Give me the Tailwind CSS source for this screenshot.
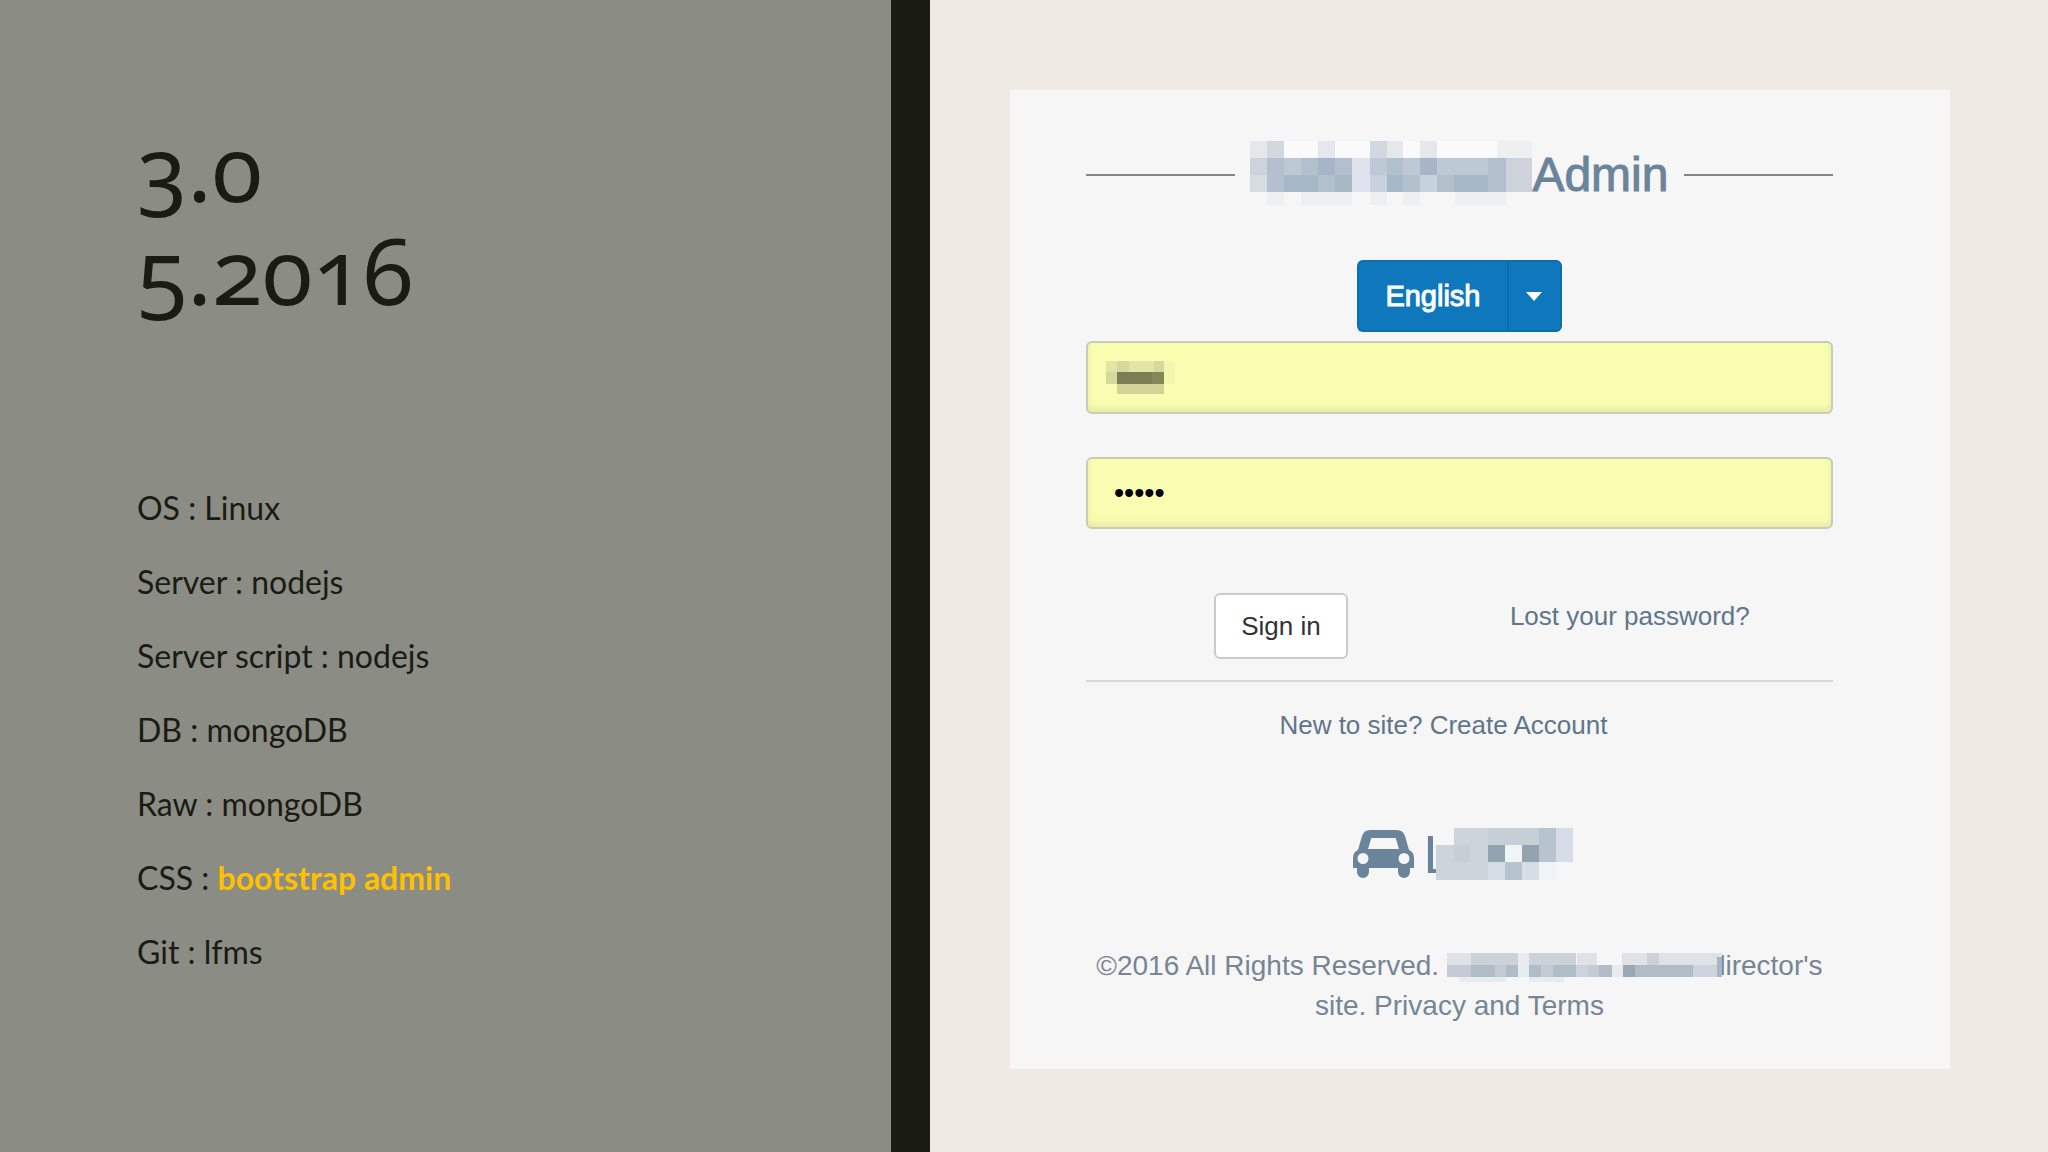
<!DOCTYPE html>
<html lang="en">
<head>
    <meta charset="UTF-8">
    <meta name="viewport" content="width=device-width, initial-scale=1.0">
    <script src="https://cdn.jsdelivr.net/npm/@tailwindcss/browser@4"></script>
    <title>3.0 - 5.2016</title>
</head>
<body class="bg-[#efebe4]">
    <main class="flex min-h-screen">
        <!-- Release notes ---------------- -->
        <section class="w-[43.5%] bg-[#8b8c84] pl-[137px] pt-[115px] text-[#1a1b13] font-[Lato,'Noto_Sans',sans-serif]">
            <h1 class="text-[92px] leading-[103px] font-['Noto_Sans','Open_Sans',sans-serif] [font-variant-numeric:oldstyle-nums] [font-kerning:none]">3.0<br>5.2016</h1>
            <ul class="mt-[150px] text-[32px] leading-[74px]">
                <li>OS : Linux</li>
                <li>Server : nodejs</li>
                <li>Server script : nodejs</li>
                <li>DB : mongoDB</li>
                <li>Raw : mongoDB</li>
                <li>CSS : <strong class="font-bold text-[#ffc000]">bootstrap admin</strong></li>
                <li>Git : lfms</li>
            </ul>
        </section>
        <div class="w-[39px] bg-[#1a1b13]"></div>
        <!-- Login screen ---------------- -->
        <section class="flex-1 pl-20 pr-[98px] py-[90px] font-['Liberation_Sans',Arial,sans-serif]">
            <form class="bg-[#f6f6f7] pl-[76px] pr-[117px] pt-[51px] pb-[43px] text-[26px] leading-8 text-[#5f758a]">
                <div class="flex items-center justify-between">
                    <span class="w-1/5 h-[2px] bg-[#858587]"></span>
                    <h2 class="flex items-center text-[48px] leading-[68px] text-[#6a849b] [-webkit-text-stroke:1px_#6a849b]">
                        <svg class="w-[282px] h-[68px]" viewBox="0 0 282 68" shape-rendering="crispEdges">
                            <path fill="#e5e7eb" d="M0 0h17v17H0zM68 0h17v17H68zM137 0h16v17H137zM170 0h17v17H170z"/>
                            <path fill="#d1d8e0" d="M17 0h17v17H17zM120 0h17v17H120z"/>
                            <path fill="#fafafc" d="M34 0h34v17H34zM85 0h35v17H85zM153 0h17v17H153zM187 0h60v17H187z"/>
                            <path fill="#eeeff0" d="M247 0h35v17H247zM17 51h17v13H17zM51 51h51v13H51zM120 51h17v13H120zM153 51h17v13H153zM205 51h51v13H205z"/>
                            <path fill="#ced2da" d="M0 17h17v17H0zM256 17h26v34H256z"/>
                            <path fill="#d7dce0" d="M0 34h17v17H0z"/>
                            <path fill="#b4bfd0" d="M17 17h17v34H17zM85 17h17v17H85z"/>
                            <path fill="#bdcad5" d="M34 17h17v17H34zM120 17h17v17H120zM153 17h17v17H153zM187 17h51v17H187z"/>
                            <path fill="#b2bfcc" d="M51 17h17v17H51zM137 17h16v17H137zM238 17h18v34H238z"/>
                            <path fill="#a6b5c7" d="M68 17h17v17H68zM170 17h17v17H170z"/>
                            <path fill="#a6b7c5" d="M34 34h34v17H34zM85 34h17v17H85zM137 34h16v17H137zM204 34h34v17H204z"/>
                            <path fill="#b3c1cd" d="M68 34h17v17H68zM153 34h17v17H153zM187 34h17v17H187z"/>
                            <path fill="#e0e3ef" d="M102 17h18v34H102z"/>
                            <path fill="#c7d2dd" d="M120 34h17v17H120zM170 34h17v17H170z"/>
                        </svg>Admin
                    </h2>
                    <span class="w-1/5 h-[2px] bg-[#858587]"></span>
                </div>

                <div class="flex justify-center mt-[51px] h-[72px] text-[29px] text-white">
                    <button type="button" class="w-[150px] rounded-l-md bg-[#0f78bd] border-2 border-r-0 border-[#0d6fb2] [-webkit-text-stroke:1px_white]">English</button>
                    <button type="button" aria-label="Choose language" class="flex items-center justify-center w-[55px] rounded-r-md bg-[#0f78bd] border-2 border-[#0d6cac]">
                        <svg class="w-4 h-[9px]" viewBox="0 0 16 9"><path fill="#fff" d="M0 0h16L8 9z"/></svg>
                    </button>
                </div>

                <div class="relative mt-[9px]">
                    <input type="text" aria-label="Username" class="block w-full h-[73px] rounded-md border-2 border-[#c9cbb4] bg-[#f8fdb2] px-[26px] shadow-[inset_0_-4px_6px_rgba(0,0,0,0.07)] focus:outline-none">
                    <svg class="absolute left-5 top-[19px] w-[70px] h-[36px]" viewBox="0 0 70 36" shape-rendering="crispEdges">
                        <path fill="#e1e6a4" d="M0 1h11v11H0zM23 1h25v11H23z"/>
                        <path fill="#d5da9c" d="M11 1h12v11H11zM48 1h10v11H48zM0 12h11v12H0z"/>
                        <path fill="#7d7d54" d="M11 12h35v12H11z"/>
                        <path fill="#868759" d="M46 12h12v12H46z"/>
                        <path fill="#d0d597" d="M11 24h47v10H11z"/>
                        <path fill="#f2f7b0" d="M58 1h11v23H58z"/>
                    </svg>
                </div>
                <input type="password" value="admin" aria-label="Password" class="block mt-[43px] w-full h-[72px] rounded-md border-2 border-[#c9cbb4] bg-[#f8fdb2] px-[26px] text-[29px] text-black shadow-[inset_0_-4px_6px_rgba(0,0,0,0.07)] focus:outline-none">

                <div class="flex items-start gap-[162px] mt-16 pl-32">
                    <button type="submit" class="w-[134px] h-[66px] rounded-md border-2 border-[#cccacd] bg-white text-[#333]">Sign in</button>
                    <a href="#" class="mt-[7px]">Lost your password?</a>
                </div>
                <div class="mt-[21px] border-t-2 border-[#d8d6d9]"></div>
                <p class="mt-[27px] pr-8 text-center">New to site? <a href="#">Create Account</a></p>

                <!-- Logo ---------------- -->
                <div class="flex items-center justify-center mt-[87px] pl-2 text-[54px] leading-[52px] text-[#6a849b]">
                    <svg class="w-[61px] h-[48px]" viewBox="0 0 61 48">
                        <path fill="currentColor" fill-rule="evenodd" d="M17 0h27q6 0 8 6l4 14q5 2 5 8v10h-4v4a6 6 0 0 1-12 0v-4H16v4a6 6 0 0 1-12 0v-4H0V28q0-6 5-8L9 6q2-6 8-6zM19 8q-1 0-1 1l-3 10h31L43 9q0-1-1-1zM10 23a5.500 5.500 0 1 0 0 11a5.500 5.500 0 1 0 0-11zM51 23a5.500 5.500 0 1 0 0 11a5.500 5.500 0 1 0 0-11z"/>
                    </svg>
                    <span class="ml-[9px] w-[13px]">L</span>
                    <svg class="relative w-[137px] h-[52px]" viewBox="0 0 137 52" shape-rendering="crispEdges">
                        <path fill="#f6f6f7" d="M0 0h18v17H0zM120 34h17v18H120z"/>
                        <path fill="#ced4db" d="M18 0h34v17H18zM0 17h18v17H0zM34 17h18v17H34zM0 34h52v18H0z"/>
                        <path fill="#c6cfd6" d="M52 0h51v17H52zM18 17h16v17H18z"/>
                        <path fill="#b8c3d0" d="M103 0h17v34H103zM69 34h17v18H69z"/>
                        <path fill="#d6dde6" d="M120 0h17v34H120zM52 34h17v18H52zM86 34h17v18H86z"/>
                        <path fill="#92a4b0" d="M52 17h17v17H52zM86 17h17v17H86z"/>
                        <path fill="#eff4f6" d="M69 17h17v17H69zM103 34h17v18H103z"/>
                    </svg>
                </div>

                <p class="mt-[66px] text-center text-[28px] leading-10 text-[#778594]">
                    ©2016 All Rights Reserved.
                    <svg class="relative inline-block align-middle w-[276px] h-[30px] -mr-[13px]" viewBox="0 0 276 30" shape-rendering="crispEdges">
                        <path fill="#f6f6f7" d="M0 0h275v30H0z"/>
                        <path fill="#e0e2e6" d="M0 0h24v12H0zM130 0h20v12H130zM175 0h100v12H175z"/>
                        <path fill="#ccd2d8" d="M24 0h47v12H24zM82 0h47v12H82zM200 0h12v12H200z"/>
                        <path fill="#e8ebf0" d="M71 0h11v24H71zM12 24h47v5H12zM82 24h35v5H82zM165 12h11v12H165z"/>
                        <path fill="#c5cbd5" d="M0 12h24v12H0zM48 12h11v12H48zM94 12h12v12H94zM141 12h11v12H141z"/>
                        <path fill="#b0bdc9" d="M24 12h24v12H24zM59 12h12v12H59zM82 12h12v12H82zM106 12h23v12H106zM152 12h13v12H152zM188 12h58v12H188z"/>
                        <path fill="#99a8b4" d="M176 12h12v12H176z"/>
                        <path fill="#cdd4df" d="M129 12h12v12H129zM246 12h24v12H246z"/>
                        <path fill="#a9b4c2" d="M270 4h5v20H270z"/>
                    </svg><span>director's</span> site. <a href="#">Privacy and Terms</a>
                </p>
            </form>
        </section>
    </main>
</body>
</html>
